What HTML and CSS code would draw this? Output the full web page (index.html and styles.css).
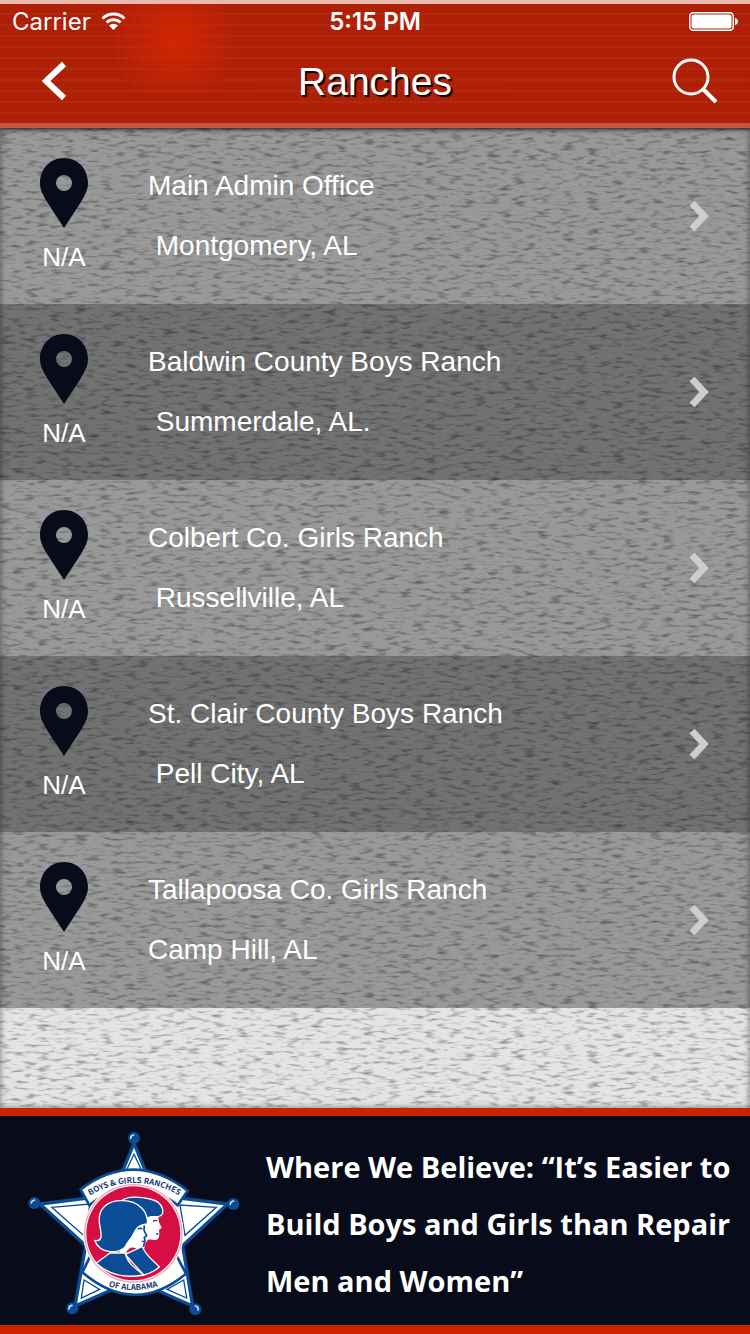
FILE: index.html
```
<!DOCTYPE html>
<html lang="en">
<head>
  <meta charset="UTF-8" />
  <meta name="viewport" content="width=device-width, initial-scale=1.0" />
  <title>Ranches</title>
  <link rel="stylesheet" href="styles.css">
</head>
<body>

  <!-- shared shapes -->
  <svg class="defs" width="0" height="0" aria-hidden="true">
    <symbol id="pin" viewBox="0 0 48 70">
      <path fill-rule="evenodd" d="M24 0C10 0 0 11 0 25c0 7 3 12 7 19l17 26 17-26c4-7 7-12 7-19C48 11 38 0 24 0zm0 17a8 8 0 1 1 0 16 8 8 0 0 1 0-16z"/>
    </symbol>
    <symbol id="chevron" viewBox="0 0 20 32">
      <path d="M3 3l12 13L3 29" fill="none" stroke="currentColor" stroke-width="7"/>
    </symbol>
  </svg>

  <header class="header">
    <div class="status">
      <div class="carrier">
        <span>Carrier</span>
        <svg width="25" height="18" viewBox="0 0 25 18" aria-hidden="true">
          <path d="M1.500 6.500a15.500 15.500 0 0 1 22 0M5.500 10.500a10 10 0 0 1 14 0" fill="none" stroke="#fff" stroke-width="3"/>
          <path d="M8 13.500a6.500 6.500 0 0 1 9 0L12.500 18z" fill="#fff"/>
        </svg>
      </div>
      <span class="time">5:15 PM</span>
      <svg class="battery" width="49" height="19" viewBox="0 0 49 19" aria-hidden="true">
        <rect x=".75" y=".75" width="43.500" height="17.500" rx="3.500" fill="none" stroke="#fff" stroke-width="1.500"/>
        <rect x="2.500" y="2.500" width="40" height="14" rx="2" fill="#fff"/>
        <path d="M46 6c4 1 4 6 0 7z" fill="#fff"/>
      </svg>
    </div>
    <nav class="nav">
      <button class="nav-btn" aria-label="Back">
        <svg width="26" height="40" viewBox="0 0 26 40"><path d="M22 3L4 20l18 17" fill="none" stroke="#fff" stroke-width="6"/></svg>
      </button>
      <h1>Ranches</h1>
      <button class="nav-btn" aria-label="Search">
        <svg width="46" height="46" viewBox="0 0 46 46"><circle cx="19" cy="19" r="17" fill="none" stroke="#fff" stroke-width="3"/><path d="M31 31l13 13" stroke="#fff" stroke-width="4"/></svg>
      </button>
    </nav>
  </header>

  <main class="content">
    <svg class="texture" aria-hidden="true">
      <filter id="grain" x="0" y="0" width="100%" height="100%" color-interpolation-filters="sRGB">
        <feTurbulence type="fractalNoise" baseFrequency="0.08 0.3" numOctaves="2" seed="7"/>
        <feColorMatrix values="0 0 0 0 0.25  0 0 0 0 0.25  0 0 0 0 0.25  1.4 0 0 0 -0.7"/>
      </filter>
      <rect width="100%" height="100%" filter="url(#grain)"/>
    </svg>
    <ul class="ranches">
      <li>
        <a class="ranch" href="#main-office">
          <span class="distance"><svg class="pin"><use href="#pin"/></svg>N/A</span>
          <span class="info"><span>Main Admin Office</span><span>&nbsp;Montgomery, AL</span></span>
          <svg class="chevron"><use href="#chevron"/></svg>
        </a>
      </li>
      <li>
        <a class="ranch" href="#baldwin">
          <span class="distance"><svg class="pin"><use href="#pin"/></svg>N/A</span>
          <span class="info"><span>Baldwin County Boys Ranch</span><span>&nbsp;Summerdale, AL.</span></span>
          <svg class="chevron"><use href="#chevron"/></svg>
        </a>
      </li>
      <li>
        <a class="ranch" href="#colbert">
          <span class="distance"><svg class="pin"><use href="#pin"/></svg>N/A</span>
          <span class="info"><span>Colbert Co. Girls Ranch</span><span>&nbsp;Russellville, AL</span></span>
          <svg class="chevron"><use href="#chevron"/></svg>
        </a>
      </li>
      <li>
        <a class="ranch" href="#st-clair">
          <span class="distance"><svg class="pin"><use href="#pin"/></svg>N/A</span>
          <span class="info"><span>St. Clair County Boys Ranch</span><span>&nbsp;Pell City, AL</span></span>
          <svg class="chevron"><use href="#chevron"/></svg>
        </a>
      </li>
      <li>
        <a class="ranch" href="#tallapoosa">
          <span class="distance"><svg class="pin"><use href="#pin"/></svg>N/A</span>
          <span class="info"><span>Tallapoosa Co. Girls Ranch</span><span>Camp Hill, AL</span></span>
          <svg class="chevron"><use href="#chevron"/></svg>
        </a>
      </li>
    </ul>
  </main>

  <footer class="banner">
    <svg class="logo" viewBox="36 90 642 561" role="img" aria-label="Boys &amp; Girls Ranches of Alabama">
      <!-- star -->
      <path d="M357 130L421 285L638 312L503 437L533 618L357 540L180 618L212 437L75 312L293 285z" fill="#fff" stroke="#0b4c96" stroke-width="10"/>
      <g fill="none" stroke="#0b4c96" stroke-width="4">
        <path d="M357 163L330 220H384zM110 322L225 312L208 408zM604 322L495 315L510 406z"/>
        <path d="M207 540L199 594L254 568zM506 540L515 594L456 568z"/>
      </g>
      <!-- ribbons -->
      <path d="M197 268Q357 148 518 272L488 316Q357 210 223 316z" fill="#fff" stroke="#0b4c96" stroke-width="8"/>
      <path d="M225 470L202 517Q357 650 513 521L486 470z" fill="#fff" stroke="#0b4c96" stroke-width="8"/>
      <circle cx="355" cy="400" r="151" fill="#fff"/>
      <circle cx="355" cy="400" r="148" fill="#f3a5b6"/>
      <circle cx="355" cy="400" r="144" fill="#fff"/>
      <circle cx="355" cy="400" r="141" fill="#d50f43"/>
      <g stroke="#fff" stroke-width="4" stroke-linejoin="round">
        <!-- boy -->
        <path d="M390 350H428L430 368L438 383L430 388L431 402Q431 418 420 418L400 416Q388 424 386 445L365 450z" fill="#fff"/>
        <path d="M322 301C338 288 375 290 405 297C437 303 447 326 442 342Q437 350 423 350H408L394 355Q378 318 322 301z" fill="#0b4c96"/>
        <path d="M331 463L382 439C390 465 413 480 433 501Q412 519 386 525z" fill="#0b4c96"/>
        <!-- girl -->
        <path d="M340 410L362 374L386 374L385 391L392 407L385 412L387 423L382 438Q370 445 350 440Q332 447 332 462L316 458L325 425z" fill="#fff"/>
        <path d="M239 421C268 427 257 397 253 367C248 325 280 300 323 302C370 302 401 335 397 372C378 373 365 380 358 397C350 417 336 425 331 440C315 462 254 464 239 421z" fill="#0b4c96"/>
        <path d="M243 490L285 459H331C337 490 360 504 386 525Q301 541 243 490z" fill="#0b4c96"/>
      </g>
      <path d="M388 376L387 391L395 407L388 412L390 423L385 440" fill="none" stroke="#0b4c96" stroke-width="5"/>
      <path d="M368 388q8-6 14-1M414 364q8-5 13-1M380 424h7M423 402h7" fill="none" stroke="#0b4c96" stroke-width="4"/>
      <!-- lettering -->
      <path id="arc-top" d="M205 300A257 257 0 0 1 512 300" fill="none"/>
      <path id="arc-bottom" d="M247 548Q355 592 463 548" fill="none"/>
      <g class="logo-text">
        <text><textPath href="#arc-top" startOffset="50%">BOYS &amp; GIRLS RANCHES</textPath></text>
        <text><textPath href="#arc-bottom" startOffset="50%">OF ALABAMA</textPath></text>
      </g>
      <!-- star tips -->
      <g fill="#0b4c96">
        <circle cx="357" cy="114" r="18"/>
        <circle cx="58" cy="309" r="18"/>
        <circle cx="655" cy="312" r="18"/>
        <circle cx="172" cy="625" r="18"/>
        <circle cx="541" cy="628" r="18"/>
      </g>
      <path d="M347 115q0-9 9-10M49 309q1-8 10-9M646 313q0-9 10-10M162 626q0-9 9-10M541 618q10 1 8 12" fill="none" stroke="#c9e0f4" stroke-width="5" stroke-linecap="round"/>
    </svg>
    <p>Where We Believe: “It’s Easier to<br>Build Boys and Girls than Repair<br>Men and Women”</p>
  </footer>

</body>
</html>
```
FILE: styles.css
```
:root {
  --red: #cc2200;
  --navy: #080b19;
}

* {
  box-sizing: border-box;
}

body {
  font-family: "Liberation Sans", Arial, sans-serif;
  color: #fff;
  margin: 0;
  min-height: 100vh;
  display: flex;
  flex-direction: column;
}

.defs {
  position: absolute;
}

.header {
  height: 128px;
  border-top: 4px solid #edb9af;
  border-bottom: 5px solid #c4553f;
  background:
    radial-gradient(circle at 175px 36px, rgba(220, 38, 2, 0.8), rgba(220, 38, 2, 0) 65px),
    repeating-linear-gradient(90deg, rgba(80, 0, 0, 0.06) 0 2px, transparent 2px 4px),
    repeating-linear-gradient(#b12107 0 9px, #b5290f 9px 11px);
  box-shadow: 0 1px 4px rgba(0, 0, 0, 0.7);
  position: relative;
  z-index: 1;
}

.status {
  height: 34px;
  padding: 0 12px;
  display: grid;
  grid-template-columns: 1fr auto 1fr;
  align-items: center;
  font-family: Inter, sans-serif;
  font-size: 24px;
}

.carrier {
  display: flex;
  align-items: center;
  gap: 10px;
}

.time {
  font-weight: 600;
}

.battery {
  justify-self: end;
}

.nav {
  height: 88px;
  padding: 0 29px;
  display: flex;
  align-items: center;
  justify-content: space-between;
}

.nav-btn {
  width: 52px;
  height: 60px;
  padding: 0;
  border: none;
  background: none;
  cursor: pointer;
}

h1 {
  margin: 0;
  font-size: 39px;
  font-weight: normal;
  text-shadow: 2px 2px 1px #000;
}

.content {
  flex: 1;
  position: relative;
  background-color: #e4e4e4;
  padding-bottom: 100px;
}

.texture {
  position: absolute;
  inset: 0;
  width: 100%;
  height: 100%;
  box-shadow: inset 0 0 6px rgba(0, 0, 0, 0.5);
}

.ranches {
  position: relative;
  list-style: none;
  margin: 0;
  padding: 0;
}

.ranch {
  display: flex;
  gap: 20px;
  height: 176px;
  padding-right: 41px;
  background-color: rgba(0, 0, 0, 0.33);
  color: #fff;
  text-decoration: none;
}

li:nth-child(even) .ranch {
  background-color: rgba(0, 0, 0, 0.5);
}

.distance {
  width: 128px;
  padding-top: 30px;
  display: flex;
  flex-direction: column;
  align-items: center;
  gap: 14px;
  font-size: 26px;
  line-height: 30px;
}

.pin {
  width: 48px;
  height: 70px;
  fill: var(--navy);
}

.info {
  flex: 1;
  padding-top: 28px;
  display: flex;
  flex-direction: column;
  font-size: 28px;
  line-height: 60px;
}

.chevron {
  align-self: center;
  width: 20px;
  height: 32px;
  color: #cdcdcd;
}

.banner {
  display: flex;
  align-items: center;
  gap: 25px;
  height: 226px;
  padding: 6px 16px 0 27px;
  border-top: 8px solid var(--red);
  border-bottom: 9px solid var(--red);
  background-color: var(--navy);
}

.logo {
  flex: none;
  width: 214px;
  height: 187px;
}

.logo-text {
  font-family: "Noto Sans CJK KR", sans-serif;
  font-size: 24px;
  font-weight: bold;
  fill: #123a72;
  text-anchor: middle;
}

.banner p {
  margin: 0;
  font-family: "Open Sans", sans-serif;
  font-size: 29px;
  font-weight: bold;
  line-height: 57px;
  white-space: nowrap;
}
```
